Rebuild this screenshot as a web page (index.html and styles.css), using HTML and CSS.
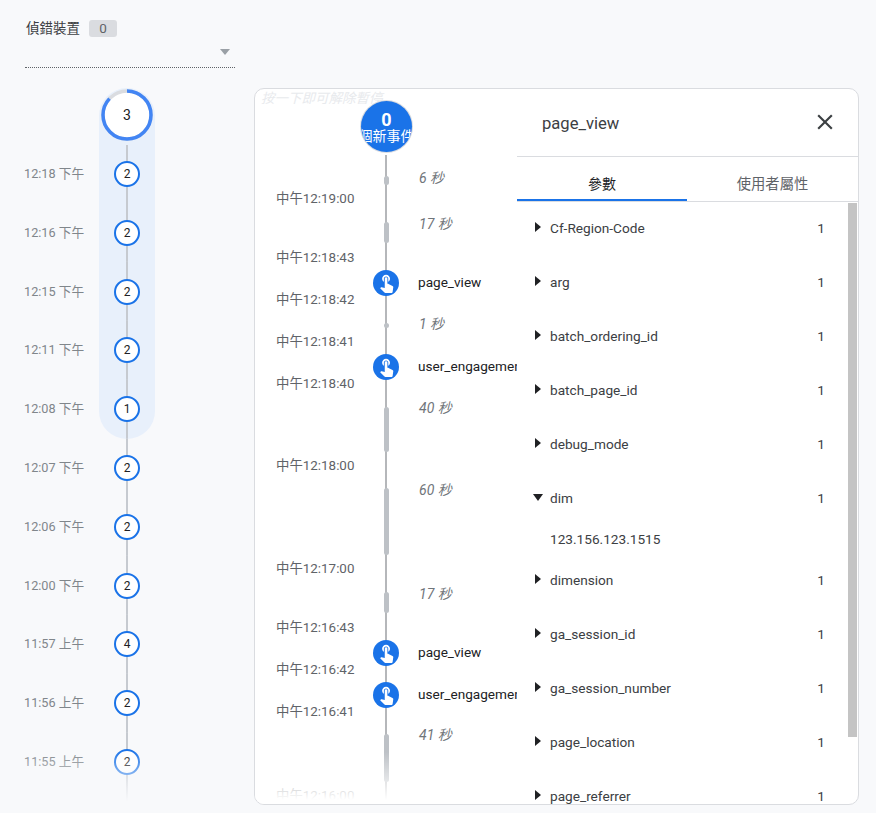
FILE: index.html
```html
<!DOCTYPE html>
<html lang="en">
<head>
    <meta charset="UTF-8">
    <meta name="viewport" content="width=device-width, initial-scale=1.0">
    <title>DebugView</title>
    <link rel="stylesheet" href="styles.css">
</head>
<body>
    <svg class="defs" width="0" height="0" aria-hidden="true">
        <symbol id="touch" viewBox="0 0 24 24">
            <path d="M9 11.24V7.5C9 6.12 10.12 5 11.5 5S14 6.12 14 7.5v3.74c1.21-.81 2-2.18 2-3.74C16 5.01 13.99 3 11.5 3S7 5.01 7 7.5c0 1.56.79 2.93 2 3.74zm9.84 4.63l-4.54-2.26c-.17-.07-.35-.11-.54-.11H13v-6c0-.83-.67-1.5-1.5-1.5S10 6.67 10 7.5v10.74l-3.43-.72c-.08-.01-.15-.03-.24-.03-.31 0-.59.13-.79.33l-.79.8 4.94 4.94c.27.27.65.44 1.06.44h6.79c.75 0 1.33-.55 1.44-1.28l.75-5.27c.01-.07.02-.14.02-.2 0-.62-.38-1.16-.91-1.38z"/>
        </symbol>
    </svg>

    <aside class="side">
        <div class="device-head">
            <span class="device-label">偵錯裝置</span>
            <span class="device-badge">0</span>
        </div>
        <div class="device-select"><span class="select-arrow"></span></div>

        <div class="minutes">
            <div class="minute minute-top">
                <span class="minute-time"></span>
                <div class="minute-axis">
                    <div class="big-count">
                        <svg width="52" height="52" viewBox="0 0 52 52">
                            <circle cx="26" cy="26" r="24" fill="#fff" stroke="#dadce0" stroke-width="3.5"/>
                            <circle cx="26" cy="26" r="24" fill="none" stroke="#4285f4" stroke-width="3.5" pathLength="100" stroke-dasharray="87 13" transform="rotate(-90 26 26)"/>
                        </svg>
                        <span class="big-count-num">3</span>
                    </div>
                </div>
            </div>
            <div class="minute minute-sel"><span class="minute-time">12:18 下午</span><div class="minute-axis"><span class="count">2</span></div></div>
            <div class="minute minute-sel"><span class="minute-time">12:16 下午</span><div class="minute-axis"><span class="count">2</span></div></div>
            <div class="minute minute-sel"><span class="minute-time">12:15 下午</span><div class="minute-axis"><span class="count">2</span></div></div>
            <div class="minute minute-sel"><span class="minute-time">12:11 下午</span><div class="minute-axis"><span class="count">2</span></div></div>
            <div class="minute minute-sel minute-sel-end"><span class="minute-time">12:08 下午</span><div class="minute-axis"><span class="count">1</span></div></div>
            <div class="minute"><span class="minute-time">12:07 下午</span><div class="minute-axis"><span class="count">2</span></div></div>
            <div class="minute"><span class="minute-time">12:06 下午</span><div class="minute-axis"><span class="count">2</span></div></div>
            <div class="minute"><span class="minute-time">12:00 下午</span><div class="minute-axis"><span class="count">2</span></div></div>
            <div class="minute"><span class="minute-time">11:57 上午</span><div class="minute-axis"><span class="count">4</span></div></div>
            <div class="minute"><span class="minute-time">11:56 上午</span><div class="minute-axis"><span class="count">2</span></div></div>
            <div class="minute"><span class="minute-time">11:55 上午</span><div class="minute-axis"><span class="count">2</span></div></div>
            <div class="minute minute-tail"><span class="minute-time"></span><div class="minute-axis"></div></div>
        </div>
        <div class="side-fade"></div>
    </aside>

    <main class="card">
        <section class="timeline">
            <div class="pause-hint">按一下即可解除暫停</div>
            <div class="new-events">
                <strong>0</strong>
                <span>個新事件</span>
            </div>

            <div class="tl-row tl-head" style="height:48px;--h:9px"><span class="tl-time"></span><div class="tl-axis"><span class="gap"></span></div><span class="tl-gap">6 秒</span></div>
            <div class="tl-row" style="height:59px;--h:21px"><span class="tl-time">中午12:19:00</span><div class="tl-axis"><span class="gap"></span></div><span class="tl-gap">17 秒</span></div>
            <div class="tl-row" style="height:42px"><span class="tl-time">中午12:18:43</span><div class="tl-axis"><span class="event-dot"><svg width="21" height="21"><use href="#touch"/></svg></span></div><span class="tl-event">page_view</span></div>
            <div class="tl-row" style="height:42px;--h:5px"><span class="tl-time">中午12:18:42</span><div class="tl-axis"><span class="gap"></span></div><span class="tl-gap">1 秒</span></div>
            <div class="tl-row" style="height:42px"><span class="tl-time">中午12:18:41</span><div class="tl-axis"><span class="event-dot"><svg width="21" height="21"><use href="#touch"/></svg></span></div><span class="tl-event">user_engagement</span></div>
            <div class="tl-row" style="height:82px;--h:45px"><span class="tl-time">中午12:18:40</span><div class="tl-axis"><span class="gap"></span></div><span class="tl-gap">40 秒</span></div>
            <div class="tl-row" style="height:103px;--h:67px"><span class="tl-time">中午12:18:00</span><div class="tl-axis"><span class="gap"></span></div><span class="tl-gap">60 秒</span></div>
            <div class="tl-row" style="height:59px;--h:21px"><span class="tl-time">中午12:17:00</span><div class="tl-axis"><span class="gap"></span></div><span class="tl-gap">17 秒</span></div>
            <div class="tl-row" style="height:42px"><span class="tl-time">中午12:16:43</span><div class="tl-axis"><span class="event-dot"><svg width="21" height="21"><use href="#touch"/></svg></span></div><span class="tl-event">page_view</span></div>
            <div class="tl-row" style="height:42px"><span class="tl-time">中午12:16:42</span><div class="tl-axis"><span class="event-dot"><svg width="21" height="21"><use href="#touch"/></svg></span></div><span class="tl-event">user_engagement</span></div>
            <div class="tl-row" style="height:84px;--h:48px"><span class="tl-time">中午12:16:41</span><div class="tl-axis"><span class="gap"></span></div><span class="tl-gap">41 秒</span></div>
            <div class="tl-row" style="height:20px"><span class="tl-time">中午12:16:00</span></div>
            <div class="tl-fade"></div>
        </section>

        <section class="panel">
            <header class="panel-head">
                <span class="panel-title">page_view</span>
                <svg class="panel-close" width="26" height="26" viewBox="0 0 24 24"><path d="M19 6.41L17.59 5 12 10.59 6.41 5 5 6.41 10.59 12 5 17.59 6.41 19 12 13.41 17.59 19 19 17.59 13.41 12z"/></svg>
            </header>
            <nav class="tabs">
                <span class="tab tab-active">參數</span>
                <span class="tab">使用者屬性</span>
            </nav>
            <div class="params">
                <div class="param-list">
                    <div class="param"><span class="caret"></span><span class="param-name">Cf-Region-Code</span><span>1</span></div>
                    <div class="param"><span class="caret"></span><span class="param-name">arg</span><span>1</span></div>
                    <div class="param"><span class="caret"></span><span class="param-name">batch_ordering_id</span><span>1</span></div>
                    <div class="param"><span class="caret"></span><span class="param-name">batch_page_id</span><span>1</span></div>
                    <div class="param"><span class="caret"></span><span class="param-name">debug_mode</span><span>1</span></div>
                    <div class="param"><span class="caret caret-open"></span><span class="param-name">dim</span><span>1</span></div>
                    <div class="param-value">123.156.123.1515</div>
                    <div class="param"><span class="caret"></span><span class="param-name">dimension</span><span>1</span></div>
                    <div class="param"><span class="caret"></span><span class="param-name">ga_session_id</span><span>1</span></div>
                    <div class="param"><span class="caret"></span><span class="param-name">ga_session_number</span><span>1</span></div>
                    <div class="param"><span class="caret"></span><span class="param-name">page_location</span><span>1</span></div>
                    <div class="param"><span class="caret"></span><span class="param-name">page_referrer</span><span>1</span></div>
                </div>
                <div class="scrollbar"></div>
            </div>
        </section>
    </main>
</body>
</html>
```

FILE: styles.css
```css
* {
    box-sizing: border-box;
}

body {
    display: flex;
    align-items: flex-start;
    height: 100vh;
    margin: 0;
    overflow: hidden;
    font-family: Roboto, "Noto Sans CJK TC", sans-serif;
    font-size: 14px;
    color: #202124;
    background-color: #f8f9fb;
}

.defs {
    position: absolute;
}

/* left column */
.side {
    position: relative;
    flex: none;
    width: 254px;
    height: 813px;
    overflow: hidden;
}

.device-head {
    display: flex;
    align-items: center;
    gap: 9px;
    height: 17px;
    margin: 20px 0 0 26px;
}

.device-label {
    font-size: 13.5px;
    line-height: 17px;
    color: #3c4043;
}

.device-badge {
    width: 28px;
    height: 17px;
    border-radius: 3px;
    background-color: #dadce0;
    color: #5f6368;
    font-size: 13.5px;
    line-height: 17px;
    text-align: center;
}

.device-select {
    display: flex;
    align-items: center;
    justify-content: flex-end;
    width: 210px;
    height: 31px;
    margin-left: 25px;
    padding: 0 5px 0 0;
    border-bottom: 1px dotted #5f6368;
}

.select-arrow {
    width: 0;
    height: 0;
    border-style: solid;
    border-width: 6px 5px 0;
    border-color: #9aa0a6 transparent transparent;
    margin-bottom: 1px;
}

.minutes {
    margin-top: 20px;
}

.minute {
    display: flex;
    align-items: stretch;
    height: 58.8px;
}

.minute-top {
    height: 56.6px;
}

.minute-tail {
    height: 12px;
}

.minute-time {
    align-self: center;
    width: 99px;
    padding-left: 24px;
    font-size: 12.7px;
    line-height: 16px;
    color: #80868b;
    white-space: nowrap;
}

.minute-axis {
    display: flex;
    align-items: center;
    justify-content: center;
    width: 56px;
    background: linear-gradient(#c6cad0, #c6cad0) center / 2px 100% no-repeat;
}

.minute-sel .minute-axis {
    background-color: #e8f0fb;
}

.minute-sel-end .minute-axis {
    border-radius: 0 0 28px 28px;
}

.minute-top .minute-axis {
    align-items: flex-start;
    padding-top: 1px;
    border-radius: 28px 28px 0 0;
    background: #e8f0fb;
}

.big-count {
    display: grid;
    place-items: center;
    width: 52px;
    height: 52px;
}

.big-count svg,
.big-count-num {
    grid-area: 1 / 1;
}

.big-count-num {
    position: relative;
    font-size: 14px;
}

.count {
    width: 26px;
    height: 26px;
    border: 2px solid #1a73e8;
    border-radius: 50%;
    background-color: #fff;
    font-size: 12px;
    line-height: 22px;
    text-align: center;
}

.side-fade {
    position: absolute;
    left: 0;
    right: 0;
    top: 750px;
    height: 56px;
    background: linear-gradient(rgba(248, 249, 251, 0), #f8f9fb 92%);
}

/* main card */
.card {
    display: flex;
    flex: none;
    width: 605px;
    height: 717px;
    margin-top: 88px;
    border: 1px solid #dadce0;
    border-radius: 10px;
    background-color: #fff;
    overflow: hidden;
}

.timeline {
    position: relative;
    flex: none;
    width: 262px;
    overflow: hidden;
}

.pause-hint {
    position: absolute;
    left: 6px;
    top: 0;
    font-size: 13.5px;
    line-height: 18px;
    font-style: italic;
    color: #e8eaed;
    white-space: nowrap;
}

.new-events {
    position: relative;
    display: flex;
    flex-direction: column;
    align-items: center;
    width: 51px;
    height: 51px;
    margin: 12px 0 3px 106px;
    padding-top: 9px;
    border-radius: 50%;
    background-color: #1a73e8;
    box-shadow: 0 0 0 1px #dadce0;
    color: #fff;
    overflow: hidden;
}

.new-events strong {
    font-size: 18px;
    line-height: 19px;
}

.new-events span {
    font-size: 14px;
    line-height: 14px;
    white-space: nowrap;
}

.tl-row {
    display: grid;
    grid-template-columns: 97px 26px auto;
    align-items: center;
    padding-left: 21px;
    white-space: nowrap;
}

.tl-time {
    align-self: start;
    margin-top: -14px;
    font-size: 13.4px;
    line-height: 20px;
    color: #5f6368;
}

.tl-axis {
    display: flex;
    align-items: center;
    justify-content: center;
    align-self: stretch;
    background: linear-gradient(#b5b7ba, #b5b7ba) center / 2px 100% no-repeat;
}

.tl-head .tl-axis {
    padding-top: 3px;
}

.gap {
    width: 5px;
    height: var(--h);
    border-radius: 3px;
    background-color: #bdc1c6;
}

.event-dot {
    display: flex;
    align-items: center;
    justify-content: center;
    width: 26px;
    height: 26px;
    border-radius: 50%;
    background-color: #1a73e8;
    fill: #fff;
}

.event-dot svg {
    margin-top: -2px;
}

.tl-event {
    margin-left: 19px;
    font-size: 13.6px;
    line-height: 20px;
    transform: translateY(-1px);
}

.tl-gap {
    margin-left: 20px;
    line-height: 20px;
    font-style: italic;
    color: #70757a;
    transform: translateY(calc(var(--h) / -2 + 1px));
}

.tl-head .tl-gap {
    transform: translateY(-1px);
}

.tl-fade {
    position: absolute;
    left: 0;
    right: 0;
    bottom: 0;
    height: 52px;
    background: linear-gradient(rgba(255, 255, 255, 0), #fff 92%);
}

/* event details */
.panel {
    display: flex;
    flex-direction: column;
    flex: 1;
    min-width: 0;
}

.panel-head {
    display: flex;
    flex: none;
    align-items: center;
    justify-content: space-between;
    height: 68px;
    padding: 0 20px 0 25px;
    border-bottom: 1px solid #dadce0;
}

.panel-title {
    font-size: 16.6px;
    margin-top: 1px;
    color: #3c4043;
}

.panel-close {
    margin-bottom: 2px;
    fill: #3c4043;
}

.tabs {
    display: flex;
    flex: none;
    height: 45px;
    border-bottom: 1px solid #dadce0;
}

.tab {
    flex: 1;
    height: 44px;
    font-size: 14.3px;
    line-height: 54px;
    overflow: hidden;
    text-align: center;
    color: #5f6368;
}

.tab-active {
    flex: none;
    width: 170px;
    border-bottom: 2px solid #1a73e8;
    font-size: 14px;
    color: #202124;
}

.params {
    display: flex;
    flex: 1;
    min-height: 0;
    overflow: hidden;
}

.param-list {
    flex: 1;
    min-width: 0;
    margin-top: -1px;
    padding: 0 23px 0 16px;
    font-size: 13.65px;
}

.param {
    display: flex;
    align-items: center;
    height: 54px;
    color: #3c4043;
}

.param-name {
    flex: 1;
    margin-left: 7px;
}

.caret {
    flex: none;
    width: 10px;
    height: 10px;
    margin-top: -2px;
    border-style: solid;
    border-width: 5px 0 5px 6px;
    border-color: transparent transparent transparent #202124;
    transform: translateX(2px);
}

.caret-open {
    height: 7px;
    border-width: 7px 5px 0;
    border-color: #202124 transparent transparent;
    transform: none;
}

.param-value {
    height: 28px;
    padding-left: 17px;
    line-height: 28px;
    color: #3c4043;
}

.scrollbar {
    flex: none;
    width: 9px;
    height: 534px;
    margin: 1px 1px 0 0;
    background-color: #c4c4c4;
}
```
